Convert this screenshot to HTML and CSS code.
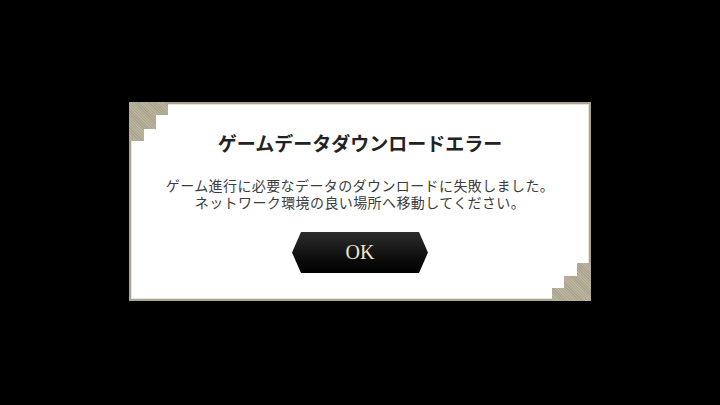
FILE: index.html
```html
<!DOCTYPE html>
<html lang="ja">
<head>
  <meta charset="UTF-8" />
  <meta name="viewport" content="width=device-width, initial-scale=1" />
  <title>ゲームデータダウンロードエラー</title>
  <link rel="stylesheet" href="styles.css">
</head>
<body>

  <!-- Error dialog -->
  <div class="overlay">
    <section class="dialog">
      <span class="corner corner-tl"></span>
      <span class="corner corner-br"></span>

      <h1 class="dialog-title">ゲームデータダウンロードエラー</h1>
      <p class="dialog-text">
        <span class="line">ゲーム進行に必要なデータのダウンロードに失敗しました。</span>
        <span class="line">ネットワーク環境の良い場所へ移動してください。</span>
      </p>
      <button class="btn-ok">OK</button>
    </section>
  </div>

</body>
</html>
```

FILE: styles.css
```css
* {
  margin: 0;
  padding: 0;
  box-sizing: border-box;
}

body {
  background: #000;
  font-family: "Noto Sans CJK JP", "Noto Sans", sans-serif;
  color: #333;
}

.overlay {
  width: 720px;
  height: 405px;
  display: flex;
  justify-content: center;
  align-items: flex-start;
  padding-top: 102px;
}

.dialog {
  position: relative;
  width: 462px;
  height: 199px;
  background: #fff;
  border: 2px solid #aba58f;
  box-shadow: inset 0 0 0 1px #e6e3da;
  display: flex;
  flex-direction: column;
  align-items: center;
  padding-top: 26px;
}

/* stepped hatch ornaments in two corners */
.corner {
  position: absolute;
  width: 39px;
  height: 39px;
  background: repeating-linear-gradient(45deg, #bab49f 0 1px, #aba48e 1px 2px);
}

.corner-tl {
  top: -2px;
  left: -2px;
  clip-path: polygon(0 0, 39px 0, 39px 13px, 27px 13px, 27px 27px, 15px 27px, 15px 39px, 0 39px);
}

.corner-br {
  bottom: -2px;
  right: -2px;
  height: 38px;
  clip-path: polygon(25px 0, 39px 0, 39px 38px, 0 38px, 0 25px, 12px 25px, 12px 13px, 25px 13px);
}

.dialog-title {
  font-size: 19px;
  line-height: 26px;
  font-weight: 700;
  color: #222;
}

.dialog-text {
  margin-top: 21px;
  display: flex;
  flex-direction: column;
  align-items: center;
  gap: 1px;
  font-size: 14px;
  letter-spacing: 0.4px;
  color: #3c3c3c;
}

.dialog-text .line {
  line-height: 16px;
}

.btn-ok {
  margin-top: 22px;
  width: 136px;
  height: 41px;
  border: none;
  background: linear-gradient(to bottom, #2e2e2e, #0a0a0a 70%, #000);
  clip-path: polygon(9px 0, calc(100% - 9px) 0, 100% 50%, calc(100% - 9px) 100%, 9px 100%, 0 50%);
  color: #efe6c8;
  font-family: "Liberation Serif", "DejaVu Serif", serif;
  font-size: 20px;
  cursor: pointer;
}
```
